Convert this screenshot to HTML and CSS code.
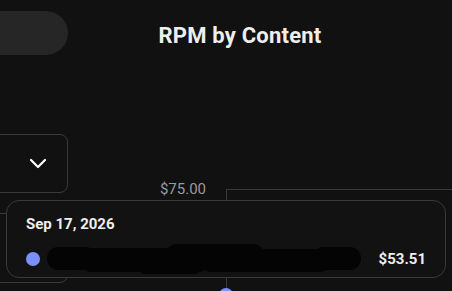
FILE: index.html
```html
<!DOCTYPE html>
<html lang="en">
<head>
  <meta charset="UTF-8">
  <meta name="viewport" content="width=device-width, initial-scale=1.0">
  <title>RPM by Content</title>
  <link rel="stylesheet" href="styles.css">
</head>
<body>
  <div class="page">
    <aside class="side">
      <div class="pill"></div>
      <div class="select">
        <svg class="chevron" width="18" height="11" viewBox="0 0 18 11">
          <path d="M2 2l7 7 7-7" fill="none" stroke="#fff" stroke-width="2.2" stroke-linecap="round" stroke-linejoin="round"/>
        </svg>
      </div>
      <div class="card"></div>
    </aside>

    <main class="main">
      <h1 class="title">RPM by Content</h1>
      <div class="chart">
        <div class="axis-label">$75.00</div>
        <div class="plot">
          <span class="point"></span>
        </div>
      </div>
    </main>
  </div>

  <!-- hover tooltip over the chart -->
  <div class="tooltip">
    <div class="tip-date">Sep 17, 2026</div>
    <div class="tip-row">
      <span class="swatch"></span>
      <svg class="redacted" width="314" height="31" viewBox="0 0 314 31">
        <g fill="#040404">
          <rect x="0" y="4" width="50" height="23" rx="11.5"/>
          <rect x="33" y="5" width="130" height="24" rx="12"/>
          <rect x="88" y="7" width="70" height="24" rx="12"/>
          <rect x="118" y="1" width="100" height="24" rx="12"/>
          <rect x="153" y="6" width="130" height="23" rx="11.5"/>
          <rect x="265" y="4" width="49" height="23" rx="11.5"/>
        </g>
      </svg>
      <span class="tip-value">$53.51</span>
    </div>
  </div>
</body>
</html>
```

FILE: styles.css
```css
html, body {
  margin: 0;
  height: 100%;
  overflow: hidden;
}
body {
  background: #111111;
  color: #eeeeee;
  font-family: Roboto, "Liberation Sans", Arial, sans-serif;
  position: relative;
}
.page {
  display: grid;
  grid-template-columns: 68px 1fr;
}
.side {
  margin-left: -30px;
  padding-top: 11px;
  display: flex;
  flex-direction: column;
}
.pill {
  height: 44px;
  background: #262626;
  border-radius: 0 22px 22px 0;
}
.select {
  margin-top: 79px;
  height: 57px;
  border: 1px solid #3a3a3a;
  border-radius: 8px;
  display: flex;
  align-items: center;
  justify-content: flex-end;
  padding-right: 20px;
}
.chevron {
  display: block;
}
.card {
  margin-top: 20px;
  height: 68px;
  border: 1px solid #3a3a3a;
  border-radius: 8px;
}
.main {
  padding-right: 40px;
}
.title {
  margin: 23px 0 0;
  text-align: center;
  font-size: 22px;
  font-weight: 700;
  line-height: 26px;
  letter-spacing: 0.2px;
  color: #eeeeee;
}
.chart {
  display: flex;
  margin-top: 140px;
  margin-right: -40px;
}
.axis-label {
  width: 138px;
  text-align: right;
  font-size: 15px;
  line-height: 16px;
  margin-top: -8px;
  color: #9a9a9a;
}
.plot {
  flex: 1;
  margin-left: 20px;
  height: 140px;
  border-top: 1px solid #3a3a3a;
  border-left: 1px solid #3a3a3a;
  position: relative;
}
.point {
  position: absolute;
  left: -8px;
  top: 98px;
  width: 14px;
  height: 14px;
  border-radius: 50%;
  background: #7c8fff;
}
.tooltip {
  position: absolute;
  left: 6px;
  top: 200px;
  width: 440px;
  height: 78px;
  box-sizing: border-box;
  border: 1px solid #3a3a3a;
  border-radius: 13px;
  background: #121212;
  padding: 14px 19px 0 19px;
}
.tip-date {
  font-size: 15px;
  font-weight: 700;
  line-height: 18px;
  color: #eeeeee;
}
.tip-row {
  display: flex;
  align-items: center;
  margin-top: 10px;
}
.swatch {
  width: 14px;
  height: 14px;
  border-radius: 50%;
  background: #7c8fff;
  flex: none;
}
.redacted {
  display: block;
  margin-left: 7px;
  flex: none;
}
.tip-value {
  margin-left: auto;
  font-size: 15px;
  font-weight: 700;
  color: #eeeeee;
}
```
